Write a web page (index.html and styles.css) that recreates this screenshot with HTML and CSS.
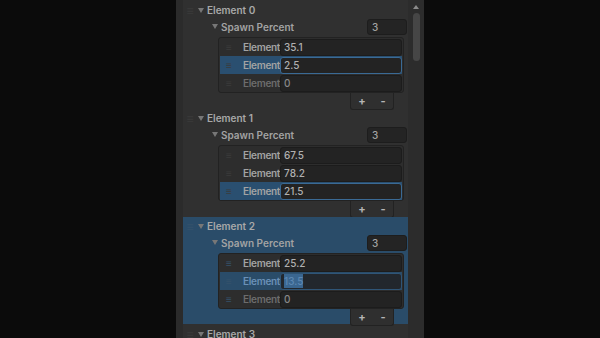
FILE: index.html
```html
<!DOCTYPE html>
<html lang="en">
<head>
    <meta charset="UTF-8">
    <title>Inspector - Spawn Percent</title>
    <link rel="stylesheet" href="styles.css">
</head>
<body>
    <div class="inspector">
        <div class="edge"></div>
        <div class="content">

            <div class="element">
                <div class="header"><span class="grip">&#8801;</span><span class="tri"></span>Element 0</div>
                <div class="prop"><span class="tri"></span><span class="prop-name">Spawn Percent</span><span class="size">3</span></div>
                <div class="list">
                    <div class="row"><span class="grip">&#8801;</span><span class="label">Element</span><span class="field">35.1</span></div>
                    <div class="row selected"><span class="grip">&#8801;</span><span class="label">Element</span><span class="field">2.5</span></div>
                    <div class="row dim"><span class="grip">&#8801;</span><span class="label">Element</span><span class="field">0</span></div>
                </div>
                <div class="footer"><span class="btn">+</span><span class="btn">-</span></div>
            </div>

            <div class="element">
                <div class="header"><span class="grip">&#8801;</span><span class="tri"></span>Element 1</div>
                <div class="prop"><span class="tri"></span><span class="prop-name">Spawn Percent</span><span class="size">3</span></div>
                <div class="list">
                    <div class="row"><span class="grip">&#8801;</span><span class="label">Element</span><span class="field">67.5</span></div>
                    <div class="row"><span class="grip">&#8801;</span><span class="label">Element</span><span class="field">78.2</span></div>
                    <div class="row selected"><span class="grip">&#8801;</span><span class="label">Element</span><span class="field">21.5</span></div>
                </div>
                <div class="footer"><span class="btn">+</span><span class="btn">-</span></div>
            </div>

            <div class="element active">
                <div class="header"><span class="grip">&#8801;</span><span class="tri"></span>Element 2</div>
                <div class="prop"><span class="tri"></span><span class="prop-name">Spawn Percent</span><span class="size">3</span></div>
                <div class="list">
                    <div class="row"><span class="grip">&#8801;</span><span class="label">Element</span><span class="field">25.2</span></div>
                    <div class="row editing"><span class="grip">&#8801;</span><span class="label">Element</span><span class="field"><span class="sel">13.5</span></span></div>
                    <div class="row dim"><span class="grip">&#8801;</span><span class="label">Element</span><span class="field">0</span></div>
                </div>
                <div class="footer"><span class="btn">+</span><span class="btn">-</span></div>
            </div>

            <div class="element last">
                <div class="header"><span class="grip">&#8801;</span><span class="tri"></span>Element 3</div>
            </div>

        </div>
        <div class="scrollbar">
            <span class="arrow"></span>
            <div class="thumb"></div>
        </div>
    </div>
</body>
</html>
```

FILE: styles.css
```css
body {
    margin: 0;
    background: #0b0b0b;
    font-family: Inter, "Noto Sans", sans-serif;
    font-size: 10px;
    color: #a3a3a3;
    overflow: hidden;
    height: 338px;
}
.inspector {
    display: flex;
    width: 248px;
    height: 338px;
    overflow: hidden;
    margin-left: 176px;
    background: #303030;
}
.edge {
    width: 7px;
    background: #2b2b2b;
}
.content {
    width: 225px;
    padding-top: 1px;
}
.element {
    height: 108px;
}
.element.last {
    height: 20px;
}
.element.active {
    background: #2a4c69;
    margin-top: 1px;
    height: 107px;
}
.header {
    display: flex;
    align-items: center;
    height: 18px;
    font-weight: 600;
    color: #a8a8a8;
}
.active .header {
    margin-top: -1px;
}
.last .header {
    margin-top: 1px;
}
.grip {
    color: #3b3b3b;
    font-size: 12px;
    width: 14px;
    text-align: center;
}
.active .grip {
    color: #35526b;
}
.tri {
    width: 0;
    height: 0;
    border-left: 3px solid transparent;
    border-right: 3px solid transparent;
    border-top: 5px solid #777;
    margin: 0 3px 0 1px;
}
.prop {
    display: flex;
    align-items: center;
    height: 15px;
    padding: 0 0 2px 28px;
    font-weight: 600;
}
.prop-name {
    flex: 1;
}
.size {
    width: 34px;
    height: 14px;
    line-height: 14px;
    padding-left: 4px;
    background: #242424;
    border: 1px solid #1d1d1d;
    border-radius: 3px;
    margin-right: 1px;
    font-weight: 500;
}
.list {
    margin: 1px 4px 0 35px;
    border: 1px solid #222;
    border-radius: 3px;
    background: #2d2d2d;
    padding: 0 1px;
    height: 54px;
}
.row {
    display: flex;
    align-items: center;
    height: 18px;
}
.row .grip {
    width: 10px;
    margin: 0 9px 0 4px;
    font-size: 10px;
}
.label {
    flex: none;
    font-weight: 600;
    letter-spacing: -0.3px;
    white-space: nowrap;
}
.field {
    flex: 1;
    height: 15px;
    line-height: 15px;
    padding-left: 3px;
    background: #232323;
    border: 1px solid #1c1c1c;
    border-radius: 3px;
    color: #b0b0b0;
    font-weight: 500;
}
.selected {
    background: #2a4f70;
}
.selected .field {
    border-color: #3a6a95;
}
.dim .label {
    color: #6c6c6c;
}
.dim .field {
    color: #888;
}
.editing {
    background: #2a4c69;
}
.editing .label {
    color: #6b90b7;
}
.editing .field {
    color: #5c87b2;
    background: #22272d;
    border-color: #2f5577;
}
.sel {
    background: #3a6690;
    padding: 1px 0;
}
.footer {
    display: flex;
    justify-content: space-around;
    align-items: center;
    width: 42px;
    height: 16px;
    margin-left: 167px;
    border: 1px solid #222;
    border-top: none;
    border-radius: 0 0 3px 3px;
    background: #2f2f2f;
    font-size: 11px;
    font-weight: 700;
    color: #b5b5b5;
}
.scrollbar {
    width: 16px;
    background: #2c2c2c;
    display: flex;
    flex-direction: column;
    align-items: center;
}
.arrow {
    width: 0;
    height: 0;
    margin-top: 5px;
    border-left: 3px solid transparent;
    border-right: 3px solid transparent;
    border-bottom: 4px solid #8a8a8a;
}
.thumb {
    width: 7px;
    height: 48px;
    margin-top: 4px;
    background: #464646;
    border-radius: 4px;
}
```
